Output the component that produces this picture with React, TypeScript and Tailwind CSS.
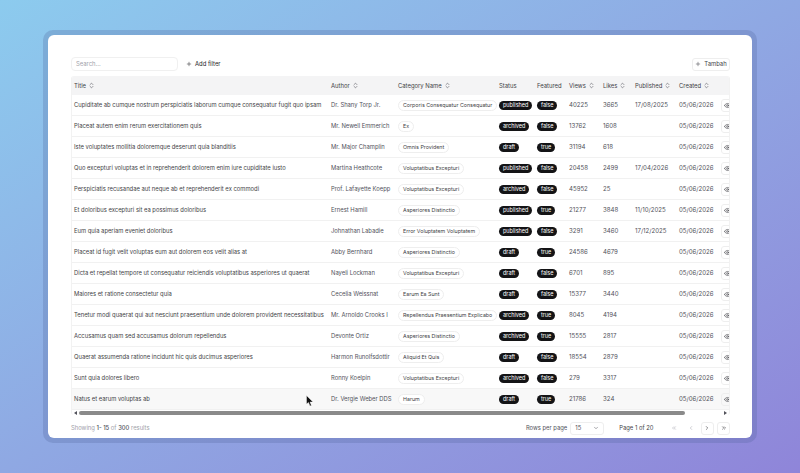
import { ChevronDown, ChevronLeft, ChevronRight, ChevronsLeft, ChevronsRight, ChevronsUpDown, Eye, Plus } from 'lucide-react';

const COLS = 'grid grid-cols-[256px_67px_101px_38px_32px_34px_32px_44px_42px_30px]';

const rows = [
  ['Cupiditate ab cumque nostrum perspiciatis laborum cumque consequatur fugit quo ipsam', 'Dr. Shany Torp Jr.', 'Corporis Consequatur Consequatur', 'published', 'false', '40225', '3665', '17/08/2025'],
  ['Placeat autem enim rerum exercitationem quis', 'Mr. Newell Emmerich', 'Ex', 'archived', 'false', '13762', '1608', ''],
  ['Iste voluptates mollitia doloremque deserunt quia blanditiis', 'Mr. Major Champlin', 'Omnis Provident', 'draft', 'true', '31194', '618', ''],
  ['Quo excepturi voluptas et in reprehenderit dolorem enim iure cupiditate iusto', 'Martina Heathcote', 'Voluptatibus Excepturi', 'published', 'false', '20458', '2499', '17/04/2026'],
  ['Perspiciatis recusandae aut neque ab et reprehenderit ex commodi', 'Prof. Lafayette Koepp', 'Voluptatibus Excepturi', 'archived', 'false', '45952', '25', ''],
  ['Et doloribus excepturi sit ea possimus doloribus', 'Ernest Hamill', 'Asperiores Distinctio', 'published', 'true', '21277', '3848', '11/10/2025'],
  ['Eum quia aperiam eveniet doloribus', 'Johnathan Labadie', 'Error Voluptatem Voluptatem', 'published', 'false', '3291', '3460', '17/12/2025'],
  ['Placeat id fugit velit voluptas eum aut dolorem eos velit alias at', 'Abby Bernhard', 'Asperiores Distinctio', 'draft', 'true', '24586', '4679', ''],
  ['Dicta et repellat tempore ut consequatur reiciendis voluptatibus asperiores ut quaerat', 'Nayeli Lockman', 'Voluptatibus Excepturi', 'draft', 'false', '6701', '895', ''],
  ['Maiores et ratione consectetur quia', 'Cecelia Weissnat', 'Earum Ea Sunt', 'draft', 'false', '15377', '3440', ''],
  ['Tenetur modi quaerat qui aut nesciunt praesentium unde dolorem provident necessitatibus', 'Mr. Arnoldo Crooks I', 'Repellendus Praesentium Explicabo', 'archived', 'true', '8045', '4194', ''],
  ['Accusamus quam sed accusamus dolorum repellendus', 'Devonte Ortiz', 'Asperiores Distinctio', 'archived', 'true', '15555', '2817', ''],
  ['Quaerat assumenda ratione incidunt hic quis ducimus asperiores', 'Harmon Runolfsdottir', 'Aliquid Et Quis', 'draft', 'false', '18554', '2879', ''],
  ['Sunt quia dolores libero', 'Ronny Koelpin', 'Voluptatibus Excepturi', 'archived', 'false', '279', '3317', ''],
  ['Natus et earum voluptas ab', 'Dr. Vergie Weber DDS', 'Harum', 'draft', 'true', '21786', '324', ''],
];

function Head({ label, sort = true, first }: { label: string; sort?: boolean; first?: boolean }) {
  return (
    <div className={`flex items-center gap-[2px] whitespace-nowrap text-[#3f3f46] ${first ? 'pl-[2px]' : 'pl-[3px]'}`}>
      {label}
      {sort && <ChevronsUpDown className="h-[7px] w-[7px] text-[#52525b]" />}
    </div>
  );
}

function Badge({ label }: { label: string }) {
  return <span className="inline-block rounded-full bg-[#141416] px-[4px] py-[1px] text-[5.5px] leading-[7px] text-white">{label}</span>;
}

function PageButton({ children, off }: { children: React.ReactNode; off?: boolean }) {
  return (
    <div className={off ? 'flex h-[13px] w-[13px] items-center justify-center text-[#a1a1aa]' : 'flex h-[13px] w-[13px] items-center justify-center rounded-[3px] border border-[#eeeeee] text-[#27272a]'}>
      {children}
    </div>
  );
}

export default function App() {
  return (
    <div className="relative flex h-[473px] w-[800px] items-start justify-center overflow-hidden bg-gradient-to-br from-[#8ccbee] via-[#8fa8e3] to-[#8f85d9] pt-[30px] font-['Inter',sans-serif] text-[6.1px] leading-[8px]">
      <div className="rounded-[10px] bg-[#4a5f96]/25 p-[5px]">
        <div className="flex h-[403px] w-[704px] flex-col rounded-[6px] bg-white pt-[22px] pr-[22px] pl-[23px]">
          <div className="flex h-[14px] items-center justify-between text-[5.9px]">
            <div className="flex items-center gap-[8px]">
              <div className="flex h-[14px] w-[107px] items-center rounded-[4px] border border-[#f0f0f0] pl-[4px] text-[#a1a1aa]">Search...</div>
              <div className="flex items-center gap-[3px] text-[#27272a]">
                <Plus className="h-[6px] w-[6px]" />
                Add filter
              </div>
            </div>
            <div className="flex h-[13px] w-[38px] items-center justify-center gap-[3px] rounded-[3px] border border-[#eeeeee] text-[#3f3f46]">
              <Plus className="h-[6px] w-[6px]" />
              Tambah
            </div>
          </div>

          <div className="mt-[5px] h-[339px] w-[659px] overflow-hidden rounded-[3px] border-x border-[#f2f2f2]">
            <div className={`${COLS} h-[19px] items-center bg-[#f4f4f5] text-[5.9px]`}>
              <Head label="Title" first />
              <Head label="Author" />
              <Head label="Category Name" />
              <Head label="Status" sort={false} />
              <Head label="Featured" sort={false} />
              <Head label="Views" />
              <Head label="Likes" />
              <Head label="Published" />
              <Head label="Created" />
              <div />
            </div>
            {rows.map((row, i) => (
              <div key={row[0]} className={`${COLS} h-[21px] items-center border-b border-[#f1f1f1] ${i === 14 ? 'bg-[#f8f8f8]' : ''}`}>
                <div className="pl-[2px] text-[5.85px] whitespace-nowrap text-[#3f3f46]">{row[0]}</div>
                <div className="pl-[3px] text-[5.85px] whitespace-nowrap text-[#52525b]">{row[1]}</div>
                <div className="pl-[3px]">
                  <span className="inline-block rounded-full border border-[#eeeeee] bg-white px-[4px] py-[1px] text-[5.3px] leading-[7px] whitespace-nowrap text-[#3f3f46]">{row[2]}</span>
                </div>
                <div className="pl-[3px]"><Badge label={row[3]} /></div>
                <div className="pl-[3px]"><Badge label={row[4]} /></div>
                <div className="pl-[3px] text-[#52525b]">{row[5]}</div>
                <div className="pl-[3px] text-[#52525b]">{row[6]}</div>
                <div className="pl-[3px] whitespace-nowrap text-[#52525b]">{row[7]}</div>
                <div className="pl-[3px] whitespace-nowrap text-[#52525b]">05/06/2026</div>
                <div className="pl-[3px]">
                  <div className="flex h-[13px] w-[20px] items-center rounded-[3px] border border-[#eeeeee] pl-[2px] text-[#3f3f46]">
                    <Eye className="h-[7px] w-[7px]" />
                  </div>
                </div>
              </div>
            ))}
            <div className="flex h-[5px] items-center justify-between px-[2px] text-[#52525b]">
              <div className="h-0 w-0 border-y-[2px] border-r-[3px] border-y-transparent border-r-current" />
              <div className="ml-[2px] h-[4px] w-[606px] rounded-full bg-[#8a8a8a]" />
              <div className="ml-auto h-0 w-0 border-y-[2px] border-l-[3px] border-y-transparent border-l-current" />
            </div>
          </div>

          <div className="mt-[3px] flex h-[20px] items-center justify-between text-[5.85px]">
            <div className="text-[#a1a1aa]">
              Showing <span className="font-medium text-[#52525b]">1- 15</span> of <span className="font-medium text-[#52525b]">300</span> results
            </div>
            <div className="flex items-center">
              <span className="text-[#52525b]">Rows per page</span>
              <div className="ml-[3px] flex h-[13px] w-[34px] items-center justify-between rounded-[3px] border border-[#eeeeee] px-[4px] text-[#52525b]">
                15
                <ChevronDown className="h-[6px] w-[6px]" />
              </div>
              <span className="ml-[15px] text-[#3f3f46]">Page 1 of 20</span>
              <div className="ml-[14px] flex items-center gap-[3.5px]">
                <PageButton off><ChevronsLeft className="h-[6px] w-[6px]" /></PageButton>
                <PageButton off><ChevronLeft className="h-[6px] w-[6px]" /></PageButton>
                <PageButton><ChevronRight className="h-[6px] w-[6px]" /></PageButton>
                <PageButton><ChevronsRight className="h-[6px] w-[6px]" /></PageButton>
              </div>
            </div>
          </div>
        </div>
      </div>

      {/* mouse cursor */}
      <svg className="absolute top-[395px] left-[306px] h-[12px] w-[8px]" viewBox="0 0 8 12">
        <path d="M0.5 0.5 L0.5 9 L2.5 7.4 L4 11 L5.4 10.4 L4 7 L7 7 Z" fill="#111" stroke="#fff" strokeWidth="0.4" />
      </svg>
    </div>
  );
}
